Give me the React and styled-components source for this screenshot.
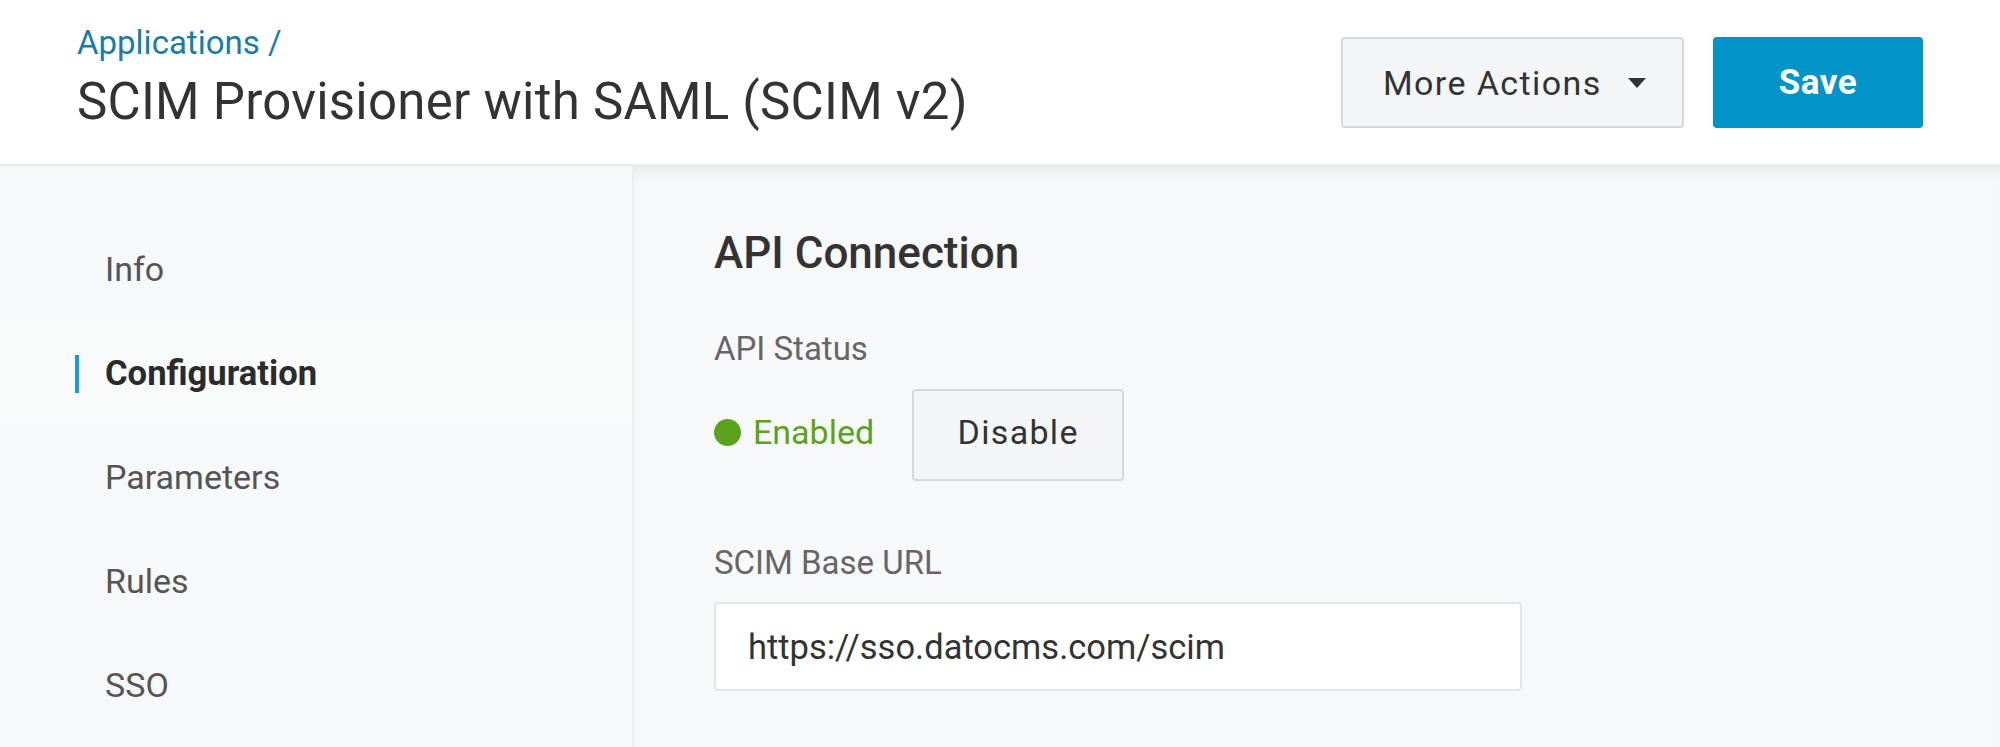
import React from 'react';
import styled, { createGlobalStyle } from 'styled-components';

const GlobalStyle = createGlobalStyle`
  html, body {
    margin: 0;
    padding: 0;
    background: #f7f8fa;
    font-family: Roboto, "Liberation Sans", Arial, sans-serif;
  }
  * {
    box-sizing: border-box;
  }
`;

const navItems = ['Info', 'Configuration', 'Parameters', 'Rules', 'SSO'];

const App = () => {
  return (
    <Page>
      <GlobalStyle />
      <Header>
        <TitleBlock>
          <Breadcrumb href='#'>Applications /</Breadcrumb>
          <Title>SCIM Provisioner with SAML (SCIM v2)</Title>
        </TitleBlock>
        <Actions>
          <SecondaryButton>
            More Actions
            <Caret />
          </SecondaryButton>
          <PrimaryButton>Save</PrimaryButton>
        </Actions>
      </Header>
      <Body>
        <Sidebar>
          {navItems.map((item) => (
            <NavItem key={item} $active={item === 'Configuration'}>
              {item}
            </NavItem>
          ))}
        </Sidebar>
        <Main>
          <SectionTitle>API Connection</SectionTitle>
          <FieldLabel $top={50}>API Status</FieldLabel>
          <StatusRow>
            <Status>
              <Dot />
              Enabled
            </Status>
            <PlainButton>Disable</PlainButton>
          </StatusRow>
          <FieldLabel $top={62}>SCIM Base URL</FieldLabel>
          <TextInput readOnly value='https://sso.datocms.com/scim' />
        </Main>
      </Body>
    </Page>
  );
};

const Page = styled.div`
  width: 2000px;
  height: 747px;
  overflow: hidden;
  display: flex;
  flex-direction: column;
`;

const Header = styled.header`
  height: 166px;
  flex-shrink: 0;
  background: #fff;
  border-bottom: 2px solid #e9ebed;
  display: flex;
  justify-content: space-between;
  align-items: flex-start;
  padding: 23px 77px 0;
  position: relative;
  z-index: 1;
`;

const TitleBlock = styled.div`
  display: flex;
  flex-direction: column;
`;

const Breadcrumb = styled.a`
  font-size: 33px;
  line-height: 40px;
  color: #1b7ca6;
  text-decoration: none;
`;

const Title = styled.h1`
  margin: 11px 0 0;
  font-size: 51px;
  line-height: 56px;
  font-weight: 400;
  letter-spacing: 0.25px;
  color: #333;
`;

const Actions = styled.div`
  display: flex;
  gap: 29px;
  margin-top: 14px;
`;

const SecondaryButton = styled.button`
  height: 91px;
  width: 343px;
  padding: 0 36px 0 40px;
  display: flex;
  align-items: center;
  justify-content: space-between;
  background: #f4f5f7;
  border: 2px solid #d6d8da;
  border-radius: 4px;
  font-family: inherit;
  font-size: 34px;
  letter-spacing: 1.4px;
  color: #333;
`;

const Caret = styled.span`
  width: 0;
  height: 0;
  border-left: 9px solid transparent;
  border-right: 9px solid transparent;
  border-top: 10px solid #333;
`;

const PrimaryButton = styled.button`
  height: 91px;
  width: 210px;
  background: #0094c9;
  border: none;
  border-radius: 4px;
  color: #fff;
  font-family: inherit;
  font-weight: 700;
  font-size: 35px;
  letter-spacing: 0.5px;
`;

const Body = styled.div`
  flex: 1;
  display: flex;
`;

const Sidebar = styled.nav`
  width: 634px;
  flex-shrink: 0;
  background: #f7f8fa;
  border-right: 2px solid #eceef0;
  padding-top: 51px;
  display: flex;
  flex-direction: column;
`;

const NavItem = styled.div`
  height: 104px;
  display: flex;
  align-items: center;
  padding-left: 105px;
  position: relative;
  font-size: ${({ $active }) => ($active ? '34.6px' : '34px')};
  font-weight: ${({ $active }) => ($active ? 700 : 400)};
  color: ${({ $active }) => ($active ? '#2b2b2b' : '#555')};
  background: ${({ $active }) => ($active ? '#f9fafa' : 'transparent')};

  &::before {
    content: '';
    display: ${({ $active }) => ($active ? 'block' : 'none')};
    position: absolute;
    left: 75px;
    top: 34px;
    width: 4px;
    height: 38px;
    background: #1a9ad6;
  }
`;

const Main = styled.main`
  flex: 1;
  padding: 61px 0 0 80px;
  background: #f7f8fa;
  box-shadow: inset 0 14px 16px -12px rgba(0, 0, 0, 0.1);
  display: flex;
  flex-direction: column;
  align-items: flex-start;
`;

const SectionTitle = styled.h2`
  margin: 0;
  font-size: 44px;
  line-height: 52px;
  font-weight: 500;
  color: #333;
`;

const FieldLabel = styled.div`
  margin-top: ${({ $top }) => $top}px;
  font-size: 33px;
  line-height: 40px;
  color: #666;
`;

const StatusRow = styled.div`
  margin-top: 20px;
  display: flex;
  align-items: center;
  gap: 38px;
`;

const Status = styled.div`
  display: flex;
  align-items: center;
  gap: 12px;
  font-size: 34px;
  line-height: 40px;
  padding-bottom: 6px;
  color: #5ba31c;
`;

const Dot = styled.span`
  width: 27px;
  height: 27px;
  border-radius: 50%;
  background: #5ba31c;
`;

const PlainButton = styled.button`
  width: 212px;
  height: 92px;
  padding-bottom: 8px;
  background: #f4f5f7;
  border: 2px solid #d6d8da;
  border-radius: 4px;
  font-family: inherit;
  font-size: 34px;
  letter-spacing: 1.3px;
  color: #333;
`;

const TextInput = styled.input`
  margin-top: 19px;
  width: 808px;
  height: 89px;
  padding: 0 32px;
  background: #fff;
  border: 2px solid #e3e5e7;
  border-radius: 4px;
  font-family: inherit;
  font-size: 34.5px;
  color: #333;
  outline: none;
`;

export default App;
